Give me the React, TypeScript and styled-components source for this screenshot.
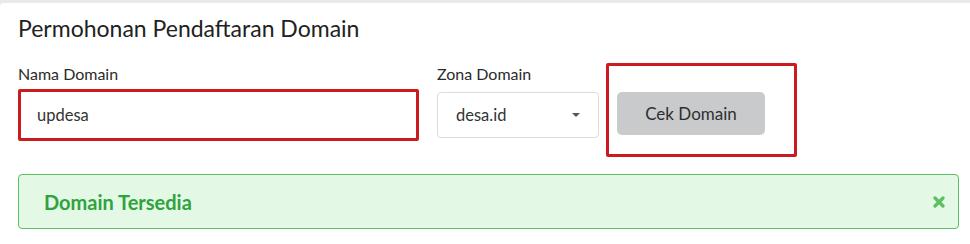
import styled, { createGlobalStyle } from 'styled-components';

const GlobalStyle = createGlobalStyle`
  html, body {
    margin: 0;
    padding: 0;
    background: #e8eaee;
  }
  body {
    font-family: Lato, "Open Sans", sans-serif;
    color: #212529;
  }
  * {
    box-sizing: border-box;
  }
`;

const Card = styled.div`
  margin-top: 3px;
  height: 241px;
  background: #ffffff;
  border-top-left-radius: 4px;
  padding: 12px 11px 0 18px;
`;

const Title = styled.h2`
  margin: 0 0 22px;
  font-size: 23px;
  line-height: 26px;
  font-weight: 400;
  color: #222;
`;

const FormRow = styled.div`
  display: flex;
  align-items: flex-start;
`;

const Field = styled.div<{ $width: number; $gap: number }>`
  width: ${({ $width }) => $width}px;
  margin-right: ${({ $gap }) => $gap}px;
  padding-top: 2px;
`;

const Label = styled.label`
  display: block;
  font-size: 16px;
  line-height: 18px;
  color: #2b2b2b;
`;

const TextInput = styled.input`
  display: block;
  width: 100%;
  height: 52px;
  margin-top: 6px;
  padding: 0 16px;
  border: 3px solid #cc1b1f;
  border-radius: 2px;
  font-family: Lato, sans-serif;
  font-size: 16.5px;
  color: #333;
  outline: none;
  background: #fff;
`;

const Select = styled.div`
  height: 46px;
  margin-top: 9px;
  padding: 0 18px;
  display: flex;
  align-items: center;
  border: 1px solid #dcdcdc;
  border-radius: 4px;
  font-size: 16.5px;
  color: #333;
`;

const Caret = styled.span`
  margin-left: auto;
  width: 0;
  height: 0;
  border-left: 4.5px solid transparent;
  border-right: 4.5px solid transparent;
  border-top: 4.5px solid #555;
`;

const Highlight = styled.div`
  width: 191px;
  height: 94px;
  border: 3px solid #cc1b1f;
  border-radius: 2px;
  padding: 26px 0 0 8px;
`;

const Button = styled.button`
  width: 148px;
  height: 43px;
  border: none;
  border-radius: 5px;
  background: #c9cacc;
  font-family: Lato, sans-serif;
  font-size: 17px;
  color: #2f2f2f;
  cursor: pointer;
`;

const Alert = styled.div`
  margin-top: 17px;
  height: 55px;
  display: flex;
  align-items: center;
  justify-content: space-between;
  padding: 0 13px 0 25px;
  background: #e3f8e5;
  border: 1px solid #5cbf62;
  border-radius: 4px;
`;

const AlertText = styled.span`
  font-size: 20px;
  font-weight: 700;
  color: #2fa33e;
`;

const CloseIcon = () => (
  <svg width="12" height="12" viewBox="0 0 12 12">
    <path
      d="M2 2 L10 10 M10 2 L2 10"
      stroke="#5cbf62"
      strokeWidth="3.2"
      strokeLinecap="round"
    />
  </svg>
);

const App = () => {
  return (
    <>
      <GlobalStyle />
      <Card>
        <Title>Permohonan Pendaftaran Domain</Title>
        <FormRow>
          <Field $width={401} $gap={18}>
            <Label>Nama Domain</Label>
            <TextInput defaultValue="updesa" />
          </Field>
          <Field $width={162} $gap={7}>
            <Label>Zona Domain</Label>
            <Select>
              desa.id
              <Caret />
            </Select>
          </Field>
          <Highlight>
            <Button>Cek Domain</Button>
          </Highlight>
        </FormRow>
        <Alert>
          <AlertText>Domain Tersedia</AlertText>
          <CloseIcon />
        </Alert>
      </Card>
    </>
  );
};

export default App;
